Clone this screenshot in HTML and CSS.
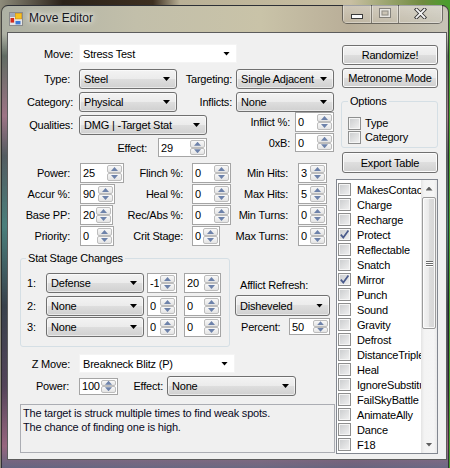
FILE: index.html
```html
<!DOCTYPE html>
<html>
<head>
<meta charset="utf-8">
<link rel="stylesheet" href="styles.css">
</head>
<body>
<div class="window">
  <div class="titlebar">
    <svg class="app-icon" width="14" height="14" viewBox="0 0 14 14">
      <rect x="0.5" y="0.5" width="13" height="13" fill="#e6e6e6" stroke="#8a8a8a"/>
      <rect x="1" y="1" width="5" height="4" fill="#9fa8ba"/>
      <rect x="6.3" y="1.3" width="6.4" height="5.6" fill="#f6c21e" stroke="#c8880e" stroke-width="0.6"/>
      <rect x="1.5" y="6" width="3.6" height="4.6" fill="#d42a1c"/>
      <rect x="6.5" y="9" width="5" height="3.4" fill="#3b78d6"/>
    </svg>
    <span class="title">Move Editor</span>
    <div class="caption">
      <div class="cap-btn cap-min">
        <svg width="12" height="5" viewBox="0 0 12 5"><rect x="0.5" y="0.5" width="11" height="4" fill="#fafafa" stroke="#3a3a3a"/></svg>
      </div>
      <div class="cap-btn cap-max">
        <svg width="12" height="10" viewBox="0 0 12 10"><rect x="0.5" y="0.5" width="11" height="9" fill="none" stroke="#555" stroke-opacity="0.6"/><rect x="1.75" y="1.75" width="8.5" height="6.5" fill="none" stroke="#f2f2f2" stroke-opacity="0.75" stroke-width="1.5"/><rect x="3" y="3" width="6" height="4" fill="none" stroke="#555" stroke-opacity="0.5"/></svg>
      </div>
      <div class="cap-btn cap-close">
        <svg width="13" height="11" viewBox="0 0 13 11"><path d="M2.5 1.5 L10.5 9.5 M10.5 1.5 L2.5 9.5" stroke="#333" stroke-width="3.6" stroke-linecap="square"/><path d="M2.5 1.5 L10.5 9.5 M10.5 1.5 L2.5 9.5" stroke="#f4f4f4" stroke-width="1.8" stroke-linecap="square"/></svg>
      </div>
    </div>
  </div>

  <div class="client">
    <div class="main">
      <div class="row r-move">
        <span class="lbl lab71 pr6">Move:</span>
        <div class="combo flat w158">Stress Test</div>
      </div>
      <div class="row r-type">
        <span class="lbl lab71 pr9">Type:</span>
        <div class="combo w98">Steel</div>
        <span class="lbl lab59 pr4">Targeting:</span>
        <div class="combo w98">Single Adjacent</div>
      </div>
      <div class="row r-cat">
        <span class="lbl lab71 pr6">Category:</span>
        <div class="combo w98">Physical</div>
        <span class="lbl lab59 pr4">Inflicts:</span>
        <div class="combo w98">None</div>
      </div>
      <div class="split">
        <div class="split-left">
          <div class="row r-qual">
            <span class="lbl lab71 pr6">Qualities:</span>
            <div class="combo w128">DMG | -Target Stat</div>
          </div>
          <div class="row r-eff">
            <span class="lbl lab150 pr11">Effect:</span>
            <div class="num w49 h19"><span class="v">29</span><span class="spin"><i class="up"></i><i class="dn"></i></span></div>
          </div>
        </div>
        <div class="split-right">
          <div class="row r-inf">
            <span class="lbl lab88 pr5">Inflict %:</span>
            <div class="num w39"><span class="v">0</span><span class="spin"><i class="up"></i><i class="dn"></i></span></div>
          </div>
          <div class="row r-oxb">
            <span class="lbl lab88 pr5">0xB:</span>
            <div class="num w39 h19"><span class="v">0</span><span class="spin"><i class="up"></i><i class="dn"></i></span></div>
          </div>
        </div>
      </div>

      <div class="numgrid">
        <span class="lbl g1">Power:</span>
        <div class="num w44"><span class="v">25</span><span class="spin"><i class="up"></i><i class="dn"></i></span></div>
        <span class="lbl g3">Flinch %:</span>
        <div class="num w39"><span class="v">0</span><span class="spin"><i class="up"></i><i class="dn"></i></span></div>
        <span class="lbl g5">Min Hits:</span>
        <div class="num w29"><span class="v">3</span><span class="spin"><i class="up"></i><i class="dn"></i></span></div>

        <span class="lbl g1">Accur %:</span>
        <div class="num w35"><span class="v">90</span><span class="spin"><i class="up"></i><i class="dn"></i></span></div>
        <span class="lbl g3">Heal %:</span>
        <div class="num w39"><span class="v">0</span><span class="spin"><i class="up"></i><i class="dn"></i></span></div>
        <span class="lbl g5">Max Hits:</span>
        <div class="num w29"><span class="v">5</span><span class="spin"><i class="up"></i><i class="dn"></i></span></div>

        <span class="lbl g1">Base PP:</span>
        <div class="num w33"><span class="v">20</span><span class="spin"><i class="up"></i><i class="dn"></i></span></div>
        <span class="lbl g3">Rec/Abs %:</span>
        <div class="num w39"><span class="v">0</span><span class="spin"><i class="up"></i><i class="dn"></i></span></div>
        <span class="lbl g5">Min Turns:</span>
        <div class="num w29"><span class="v">0</span><span class="spin"><i class="up"></i><i class="dn"></i></span></div>

        <span class="lbl g1">Priority:</span>
        <div class="num w34"><span class="v">0</span><span class="spin"><i class="up"></i><i class="dn"></i></span></div>
        <span class="lbl g3">Crit Stage:</span>
        <div class="num w28"><span class="v">0</span><span class="spin"><i class="up"></i><i class="dn"></i></span></div>
        <span class="lbl g5">Max Turns:</span>
        <div class="num w29"><span class="v">0</span><span class="spin"><i class="up"></i><i class="dn"></i></span></div>
      </div>

      <div class="mid">
        <fieldset class="group stat-group">
          <legend>Stat Stage Changes</legend>
          <div class="stat-body">
            <div class="row stat-row s1">
              <span class="lbl-l w19">1:</span>
              <div class="combo w98">Defense</div>
              <div class="num w30 ml3"><span class="v">-1</span><span class="spin"><i class="up"></i><i class="dn"></i></span></div>
              <div class="num w37 ml7"><span class="v">20</span><span class="spin"><i class="up"></i><i class="dn"></i></span></div>
            </div>
            <div class="row stat-row s2">
              <span class="lbl-l w19">2:</span>
              <div class="combo w98">None</div>
              <div class="num w30 ml3"><span class="v">0</span><span class="spin"><i class="up"></i><i class="dn"></i></span></div>
              <div class="num w37 ml7"><span class="v">0</span><span class="spin"><i class="up"></i><i class="dn"></i></span></div>
            </div>
            <div class="row stat-row s3">
              <span class="lbl-l w19">3:</span>
              <div class="combo w98">None</div>
              <div class="num w30 ml3"><span class="v">0</span><span class="spin"><i class="up"></i><i class="dn"></i></span></div>
              <div class="num w37 ml7"><span class="v">0</span><span class="spin"><i class="up"></i><i class="dn"></i></span></div>
            </div>
          </div>
        </fieldset>
        <div class="afflict">
          <div class="aff-label">Afflict Refresh:</div>
          <div class="combo w95 h21">Disheveled</div>
          <div class="row aff-pct">
            <span class="pct-lbl">Percent:</span>
            <div class="num w41 h17"><span class="v">50</span><span class="spin"><i class="up"></i><i class="dn"></i></span></div>
          </div>
        </div>
      </div>

      <div class="row r-z">
        <span class="lbl lab71 pr9">Z Move:</span>
        <div class="combo flat w156 h19">Breakneck Blitz (P)</div>
      </div>
      <div class="row r-zp">
        <span class="lbl lab71 pr10">Power:</span>
        <div class="num w39 h17"><span class="v">100</span><span class="spin"><i class="up"></i><i class="dn"></i></span></div>
        <span class="lbl lab49 pr4">Effect:</span>
        <div class="combo w129">None</div>
      </div>
      <div class="desc">The target is struck multiple times to find weak spots.<br>The chance of finding one is high.</div>
    </div>

    <div class="side">
      <div class="btn b-rand">Randomize!</div>
      <div class="btn b-metro">Metronome Mode</div>
      <fieldset class="group opt-group">
        <legend>Options</legend>
        <div class="opt-body">
          <div class="opt"><span class="chk"></span><span>Type</span></div>
          <div class="opt"><span class="chk"></span><span>Category</span></div>
        </div>
      </fieldset>
      <div class="btn b-export">Export Table</div>
      <div class="list">
        <div class="items">
          <div class="item"><span class="chk"></span><span class="it">MakesContact</span></div>
          <div class="item"><span class="chk"></span><span class="it">Charge</span></div>
          <div class="item"><span class="chk"></span><span class="it">Recharge</span></div>
          <div class="item"><span class="chk on"><svg width="11" height="11" viewBox="0 0 11 11"><path d="M1.8 5.6 L4.3 8.6 L9.4 1.6" fill="none" stroke="#4a5b8c" stroke-width="1.7"/></svg></span><span class="it">Protect</span></div>
          <div class="item"><span class="chk"></span><span class="it">Reflectable</span></div>
          <div class="item"><span class="chk"></span><span class="it">Snatch</span></div>
          <div class="item"><span class="chk on"><svg width="11" height="11" viewBox="0 0 11 11"><path d="M1.8 5.6 L4.3 8.6 L9.4 1.6" fill="none" stroke="#4a5b8c" stroke-width="1.7"/></svg></span><span class="it">Mirror</span></div>
          <div class="item"><span class="chk"></span><span class="it">Punch</span></div>
          <div class="item"><span class="chk"></span><span class="it">Sound</span></div>
          <div class="item"><span class="chk"></span><span class="it">Gravity</span></div>
          <div class="item"><span class="chk"></span><span class="it">Defrost</span></div>
          <div class="item"><span class="chk"></span><span class="it">DistanceTriple</span></div>
          <div class="item"><span class="chk"></span><span class="it">Heal</span></div>
          <div class="item"><span class="chk"></span><span class="it">IgnoreSubstitute</span></div>
          <div class="item"><span class="chk"></span><span class="it">FailSkyBattle</span></div>
          <div class="item"><span class="chk"></span><span class="it">AnimateAlly</span></div>
          <div class="item"><span class="chk"></span><span class="it">Dance</span></div>
          <div class="item"><span class="chk"></span><span class="it">F18</span></div>
        </div>
        <div class="scrollbar">
          <div class="sb-btn"><i class="sb-up"></i></div>
          <div class="sb-thumb"><span class="grip"></span><span class="grip"></span><span class="grip"></span></div>
          <div class="sb-track"></div>
          <div class="sb-btn"><i class="sb-dn"></i></div>
        </div>
      </div>
    </div>
  </div>
</div>
</body>
</html>
```
FILE: styles.css
```css
* { box-sizing: border-box; }
html, body { margin: 0; width: 450px; height: 468px; overflow: hidden; }
body {
  font-family: "Liberation Sans", Arial, sans-serif;
  font-size: 11px;
  letter-spacing: -0.2px;
  color: #000;
  background: linear-gradient(90deg, #8d8b7a 0, #2b2219 14%, #3d2f20 34%, #b9b096 40%, #c8bfa2 78%, #6f8a3e 94%, #47a02c 100%);
}

/* window frame */
.window {
  margin: 5px 0 0 1px;
  width: 448px;
  height: 470px;
  border: 1px solid rgba(30, 30, 30, 0.75);
  border-radius: 7px 7px 0 0;
  padding: 0 1px 0 5px;
  background:
    linear-gradient(180deg, rgba(0,0,0,0) 0, rgba(0,0,0,0) 28px, rgba(70,84,76,0.75) 50px, rgba(150,90,120,0.7) 110px, rgba(60,70,80,0.8) 150px, rgba(40,110,110,0.75) 220px, rgba(35,45,60,0.85) 300px, rgba(60,40,70,0.8) 380px, rgba(140,70,110,0.7) 440px, rgba(60,80,120,0.8) 470px),
    linear-gradient(90deg, #aeb1a4 0, #c2bfaa 30%, #c9c3a8 58%, #b9ae98 78%, #c7c4b6 100%);
}
.titlebar { height: 26px; display: flex; align-items: flex-start; }
.app-icon { flex: none; margin: 6px 0 0 2px; }
.title {
  margin: 4px 0 0 6px;
  font-size: 12px;
  letter-spacing: 0;
  line-height: 16px;
  color: #16161e;
  text-shadow: 0 0 5px #fff, 0 0 9px rgba(255,255,255,0.9);
}
.caption {
  margin: -1px 4px 0 auto;
  display: flex;
  height: 19px;
  border: 1px solid rgba(40, 40, 40, 0.55);
  border-top: 0;
  border-radius: 0 0 5px 5px;
  overflow: hidden;
}
.cap-btn {
  display: flex;
  align-items: center;
  justify-content: center;
  background: linear-gradient(rgba(255,255,255,0.32), rgba(255,255,255,0.08));
  box-shadow: inset 0 0 0 1px rgba(255,255,255,0.35);
}
.cap-btn + .cap-btn { border-left: 1px solid rgba(40, 40, 40, 0.45); }
.cap-min { width: 28px; padding-top: 4px; }
.cap-max { width: 27px; padding-bottom: 2px; }
.cap-close { width: 44px; padding-bottom: 1px; }

/* client area */
.client {
  width: 440px;
  height: 428px;
  border: 1px solid #5c5c5c;
  background: #f0f0f0;
  display: flex;
  overflow: hidden;
}
.main { width: 328px; flex: none; }
.side { width: 102px; flex: none; }

.row { display: flex; align-items: center; }
.lbl { flex: none; text-align: right; white-space: nowrap; }
.lbl-l { flex: none; white-space: nowrap; }
.lab71 { width: 71px; }
.lab59 { width: 59px; }
.lab150 { width: 150px; }
.lab88 { width: 88px; }
.lab49 { width: 49px; }
.pr4 { padding-right: 4px; }
.pr5 { padding-right: 5px; }
.pr6 { padding-right: 6px; }
.pr9 { padding-right: 9px; }
.pr10 { padding-right: 10px; }
.pr11 { padding-right: 11px; }
.ml3 { margin-left: 3px; }
.ml7 { margin-left: 7px; }
.w19 { width: 19px; }
.w28 { width: 28px; }
.w29 { width: 29px; }
.w30 { width: 30px; }
.w33 { width: 33px; }
.w34 { width: 34px; }
.w35 { width: 35px; }
.w37 { width: 37px; }
.w39 { width: 39px; }
.w41 { width: 41px; }
.w44 { width: 44px; }
.w49 { width: 49px; }
.w95 { width: 95px; }
.w98 { width: 98px; }
.w128 { width: 128px; }
.w129 { width: 129px; }
.w156 { width: 156px; }
.w158 { width: 158px; }

/* combo box */
.combo {
  flex: none;
  height: 20px;
  border: 1px solid #707070;
  border-radius: 3px;
  background: linear-gradient(#f3f3f3, #ebebeb 50%, #dedede 50%, #d0d0d0);
  box-shadow: inset 0 0 0 1px rgba(255,255,255,0.55);
  padding-left: 4px;
  display: flex;
  align-items: center;
  white-space: nowrap;
}
.combo::after {
  content: "";
  margin-left: auto;
  margin-right: 6px;
  width: 7px;
  height: 4px;
  background: #000;
  clip-path: polygon(0 0, 100% 0, 50% 100%);
}
.combo.flat {
  height: 19px;
  background: #fff;
  border-color: #f4f4f4;
  border-radius: 0;
  box-shadow: none;
  padding-left: 3px;
}
.h17 { height: 17px; }
.h19 { height: 19px; }
.h21 { height: 21px; }

/* numeric up-down */
.num {
  flex: none;
  height: 20px;
  border: 1px solid #a5a5a5;
  background: #fff;
  display: flex;
  align-items: center;
  padding-left: 2px;
}
.num .v { flex: 1; white-space: nowrap; overflow: hidden; }
.num.h17 { height: 17px; }
.num.h19 { height: 19px; }
.spin {
  flex: none;
  width: 15px;
  align-self: stretch;
  display: flex;
  flex-direction: column;
  margin: 1px;
}
.spin i {
  flex: 1;
  display: flex;
  align-items: center;
  justify-content: center;
  border: 1px solid #bdbdbd;
  border-radius: 2px;
  background: linear-gradient(#f8f8f8, #e4e4e4);
}
.spin i::after {
  content: "";
  width: 7px;
  height: 4px;
  background: #6d82aa;
}
.spin .up::after { clip-path: polygon(50% 0, 100% 100%, 0 100%); }
.spin .dn::after { clip-path: polygon(0 0, 100% 0, 50% 100%); }

/* top form rows */
.r-move { margin-top: 11px; height: 19px; }
.r-type { margin-top: 6px; height: 20px; }
.r-cat { margin-top: 3px; height: 20px; }
.split { display: flex; }
.split-left { width: 199px; flex: none; }
.split-right { width: 127px; flex: none; }
.r-qual { margin-top: 3px; height: 20px; }
.r-eff { margin-top: 3px; height: 19px; }
.r-inf { height: 20px; }
.r-oxb { margin-top: 1px; height: 19px; }

/* numeric grid */
.numgrid {
  margin-top: 6px;
  display: grid;
  grid-template-columns: 72px 44px 68px 39px 67px 29px;
  grid-auto-rows: 20px;
  row-gap: 1px;
  align-items: center;
}
.numgrid .g1 { padding-right: 10px; }
.numgrid .g3 { padding-right: 9px; }
.numgrid .g5 { padding-right: 10px; }
.numgrid .num { justify-self: start; }

/* group boxes */
.group {
  margin: 0;
  padding: 0;
  min-width: 0;
  border: 1px solid #d5dfe5;
  border-radius: 3px;
}
.group legend {
  padding: 0 2px;
  margin-left: 5px;
  line-height: 13px;
}
.mid { display: flex; margin-top: 6px; }
.stat-group { margin-left: 12px; width: 210px; height: 95px; flex: none; }
.stat-body { padding-left: 6px; }
.stat-row { height: 20px; }
.s1 { margin-top: 8px; }
.s2 { margin-top: 3px; }
.s3 { margin-top: 1px; }

.afflict { margin-left: 5px; width: 95px; flex: none; }
.aff-label { margin-top: 27px; padding-left: 5px; line-height: 13px; }
.afflict .combo { margin-top: 3px; }
.aff-pct { margin-top: 2px; height: 17px; }
.pct-lbl { padding-left: 6px; }
.aff-pct .num { margin-left: auto; }

/* bottom */
.r-z { margin-top: 7px; height: 19px; }
.r-zp { margin-top: 3px; height: 20px; }
.desc {
  margin: 8px 0 0 12px;
  width: 315px;
  height: 49px;
  border: 1px solid #abadb3;
  background: #f0f0f0;
  padding: 1px 2px;
  line-height: 14px;
  color: #0a0a1e;
}

/* side column */
.btn {
  margin-left: 6px;
  width: 96px;
  height: 20px;
  border: 1px solid #707070;
  border-radius: 3px;
  background: linear-gradient(#f3f3f3, #ebebeb 50%, #dedede 50%, #d0d0d0);
  box-shadow: inset 0 0 0 1px #fcfcfc;
  display: flex;
  align-items: center;
  justify-content: center;
  white-space: nowrap;
}
.b-rand { margin-top: 12px; }
.b-metro { margin-top: 3px; }
.b-export { margin-top: 4px; height: 21px; }
.opt-group { margin: 7px 0 0 5px; width: 97px; height: 53px; }
.opt-group legend { margin-left: 6px; }
.opt-body { padding: 8px 0 0 6px; }
.opt { height: 14px; display: flex; align-items: center; }
.opt .chk { margin-right: 4px; }

.chk {
  flex: none;
  width: 13px;
  height: 13px;
  border: 1px solid #8e8f8f;
  background: linear-gradient(135deg, #c9cbcd, #f2f2f2);
  box-shadow: inset 0 0 0 1px #f5f5f5;
  display: flex;
  align-items: center;
  justify-content: center;
}

.list {
  margin-top: 6px;
  width: 102px;
  height: 275px;
  border: 1px solid #828790;
  background: #fff;
  display: flex;
}
.items { flex: 1; min-width: 0; padding-top: 2px; overflow: hidden; }
.item {
  height: 15px;
  display: flex;
  align-items: center;
  padding-left: 1px;
  white-space: nowrap;
  overflow: hidden;
}
.item .chk { margin-right: 6px; }
.it { white-space: nowrap; }

.scrollbar {
  width: 16px;
  flex: none;
  display: flex;
  flex-direction: column;
  background: linear-gradient(90deg, #e4e4e4, #f3f3f3 20%, #f5f5f5 80%, #e9e9e9);
}
.sb-btn {
  height: 17px;
  flex: none;
  display: flex;
  align-items: center;
  justify-content: center;
}
.sb-btn i {
  width: 7px;
  height: 4px;
  background: #5f5f5f;
}
.sb-up { clip-path: polygon(50% 0, 100% 100%, 0 100%); }
.sb-dn { clip-path: polygon(0 0, 100% 0, 50% 100%); }
.sb-thumb {
  height: 132px;
  flex: none;
  margin: 0 1px;
  border: 1px solid #9b9b9b;
  border-radius: 2px;
  background: linear-gradient(90deg, #f4f4f4, #e9e9e9 50%, #dcdcdc 50%, #d6d6d6);
  box-shadow: inset 0 0 0 1px rgba(255,255,255,0.8);
  display: flex;
  flex-direction: column;
  align-items: center;
  justify-content: center;
  gap: 1px;
}
.grip {
  width: 7px;
  height: 1px;
  background: #6a6a6a;
  box-shadow: 0 1px 0 #fff;
}
.sb-track { flex: 1; }
```
